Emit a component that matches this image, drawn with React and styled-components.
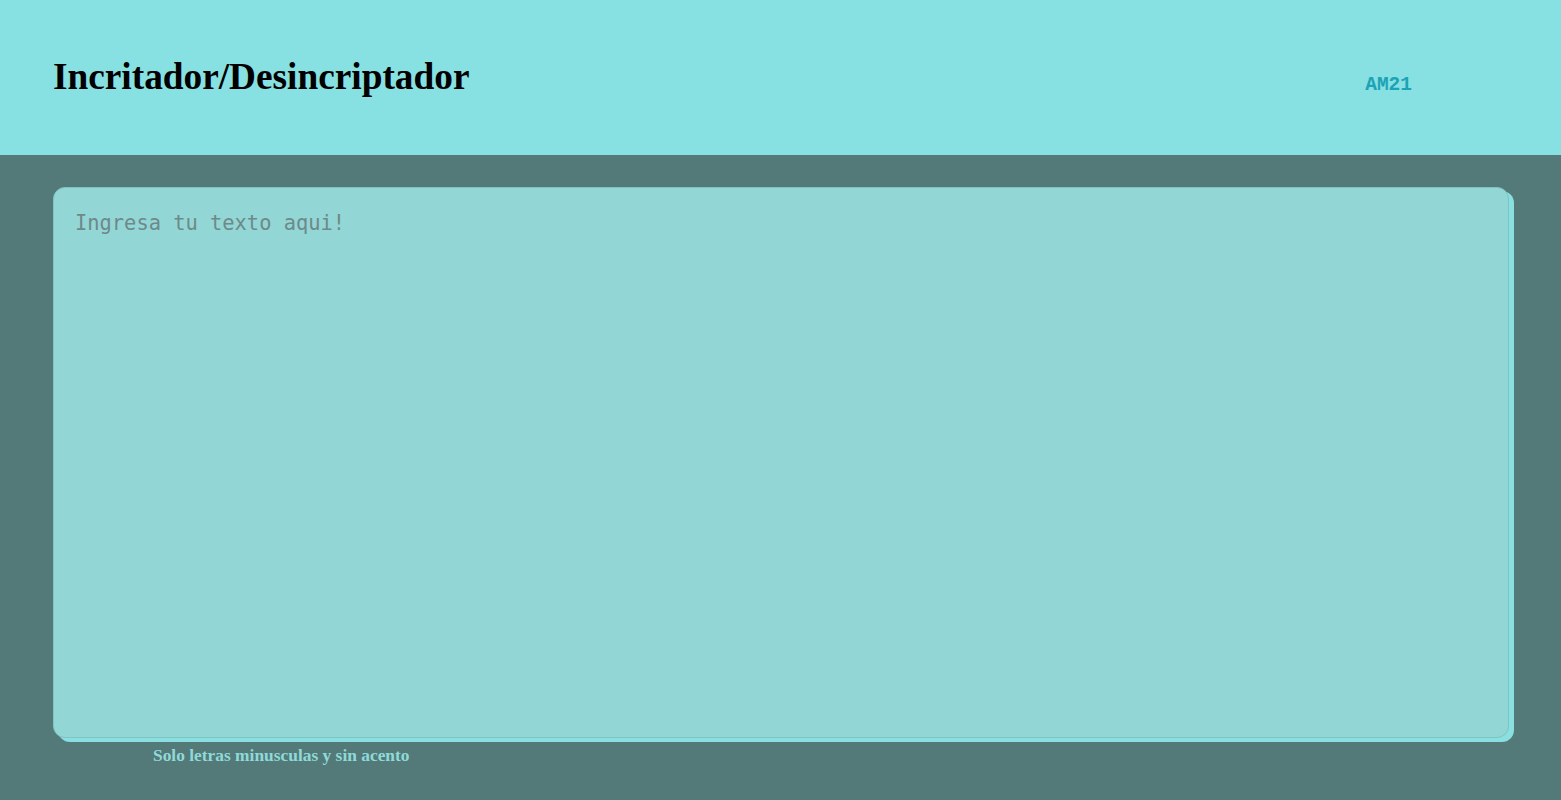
import React, { useState } from "react";
import styled, { createGlobalStyle } from "styled-components";

const GlobalStyle = createGlobalStyle`
  html, body {
    margin: 0;
    padding: 0;
    background: #537a78;
  }
`;

const Page = styled.div`
  min-height: 800px;
  background: #537a78;
  display: flex;
  flex-direction: column;
`;

const Header = styled.header`
  height: 155px;
  background: #87e0e2;
  display: flex;
  align-items: center;
  justify-content: space-between;
  padding: 0 149px 0 53px;
  box-sizing: border-box;
`;

const Title = styled.h1`
  margin: 0 0 2px 0;
  font-family: "Liberation Serif", serif;
  font-weight: bold;
  font-size: 37.3px;
  color: #000;
`;

const Brand = styled.span`
  margin-top: 14px;
  font-family: "Liberation Mono", monospace;
  font-weight: bold;
  font-size: 19.5px;
  color: #1ca3b6;
`;

const Main = styled.main`
  padding: 32px 52px 0 53px;
  display: flex;
  flex-direction: column;
`;

const TextBox = styled.textarea`
  width: 100%;
  height: 551px;
  box-sizing: border-box;
  resize: none;
  background: #93d6d6;
  border: 1px solid #7fc3c3;
  border-radius: 12px;
  box-shadow: 5px 4px 0 #8adfe0;
  padding: 23px 21px 20px;
  font-family: "DejaVu Sans Mono", monospace;
  font-size: 20.4px;
  color: #333;
  outline: none;

  &::placeholder {
    color: #6d8a89;
  }
`;

const Note = styled.p`
  margin: 7px 0 0 100px;
  font-family: "Liberation Serif", serif;
  font-weight: bold;
  font-size: 17.4px;
  color: #8fd9d9;
`;

function App() {
  const [text, setText] = useState("");

  return (
    <Page>
      <GlobalStyle />
      <Header>
        <Title>Incritador/Desincriptador</Title>
        <Brand>AM21</Brand>
      </Header>
      <Main>
        <TextBox
          value={text}
          onChange={(e) => setText(e.target.value)}
          placeholder="Ingresa tu texto aqui!"
        />
        <Note>Solo letras minusculas y sin acento</Note>
      </Main>
    </Page>
  );
}

export default App;
